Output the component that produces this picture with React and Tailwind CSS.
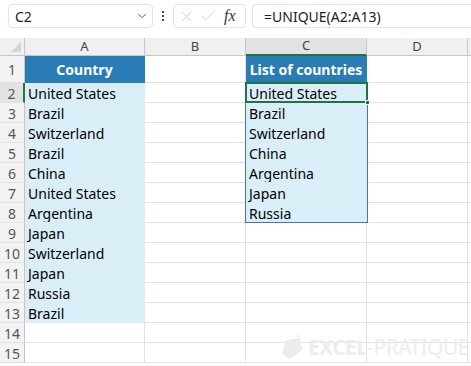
import React from "react";
import { X, Check, ChevronDown } from "lucide-react";

const colA = [
  "United States", "Brazil", "Switzerland", "Brazil", "China", "United States",
  "Argentina", "Japan", "Switzerland", "Japan", "Russia", "Brazil",
];
const colC = ["United States", "Brazil", "Switzerland", "China", "Argentina", "Japan", "Russia"];

function Cell({ fill, header, children }) {
  if (header) {
    return (
      <div className="flex items-center justify-center bg-[#2a7db4] border-r border-b border-[#2a7db4] text-white font-bold text-[14px]">
        {children}
      </div>
    );
  }
  return (
    <div
      className={`flex items-center pl-[3px] pt-[1px] border-r border-b text-[14px] text-black whitespace-nowrap overflow-hidden ${
        fill ? "bg-[#daeef8] border-[#daeef8]" : "bg-white border-[#e1e1e1]"
      }`}
    >
      {children}
    </div>
  );
}

export default function App() {
  const rows = Array.from({ length: 15 }, (_, i) => i + 1);

  return (
    <div className="w-[471px] h-[366px] overflow-hidden bg-white select-none" style={{ fontFamily: '"Noto Sans", "Open Sans", sans-serif' }}>
      {/* formula bar */}
      <div className="h-[38px] flex items-start pt-[4px] pl-[8px] gap-[6px] bg-white">
        <div className="w-[145px] h-[24px] rounded-[4px] border border-[#e3e3e3] flex items-center justify-between pl-[6px] pr-[3px] text-[14px] text-[#222]">
          <span>C2</span>
          <ChevronDown size={14} strokeWidth={1.6} className="text-[#555]" />
        </div>
        <div className="h-[24px] flex flex-col items-center justify-center gap-[2px] w-[8px]">
          <span className="w-[2px] h-[2px] bg-[#444]" />
          <span className="w-[2px] h-[2px] bg-[#444]" />
          <span className="w-[2px] h-[2px] bg-[#444]" />
        </div>
        <div className="w-[73px] h-[24px] rounded-[4px] border border-[#e3e3e3] flex items-center pl-[4px] gap-[4px] text-[#c8c8c8]">
          <X size={17} strokeWidth={1.2} />
          <Check size={18} strokeWidth={1.2} />
          <span className="text-[#333] italic text-[16px] ml-[3px] leading-none" style={{ fontFamily: '"Liberation Serif", serif' }}>
            fx
          </span>
        </div>
        <div className="flex-1 h-[24px] rounded-l-[4px] border border-r-0 border-[#e3e3e3] flex items-center pl-[11px] text-[14px] text-[#222]">
          =UNIQUE(A2:A13)
        </div>
      </div>

      {/* sheet */}
      <div className="relative">
        <div className="grid grid-cols-[25px_120px_101px_121px_101px_20px] grid-rows-[18px_27px_repeat(14,20px)]">
          {/* column headers */}
          <div className="relative bg-[#f0f0f0] border-r border-b border-[#c6c6c6]">
            <div className="absolute right-[3px] bottom-[3px] w-0 h-0 border-l-[10px] border-l-transparent border-b-[10px] border-b-[#d4d4d4]" />
          </div>
          {["A", "B", "C", "D", ""].map((l) => (
            <div
              key={l || "E"}
              className={`flex items-center justify-center text-[13px] text-[#444] border-r ${
                l === "C" ? "bg-[#e2e2e2] border-b-2 border-b-[#217346] border-r-[#c6c6c6]" : "bg-[#f0f0f0] border-b border-[#c6c6c6]"
              }`}
            >
              {l}
            </div>
          ))}

          {rows.map((r) => {
            const a = r === 1 ? "Country" : colA[r - 2];
            const c = r === 1 ? "List of countries" : colC[r - 2];
            const aFill = r <= 13;
            const cFill = r <= 8;
            return (
              <React.Fragment key={r}>
                <div
                  className={`flex items-center justify-center pt-[1px] text-[14px] text-[#555] border-b border-b-[#e1e1e1] ${
                    r === 2 ? "bg-[#e2e2e2] border-r-2 border-r-[#217346]" : "bg-[#f3f3f3] border-r border-r-[#c6c6c6]"
                  }`}
                >
                  {r}
                </div>
                <Cell fill={aFill} header={r === 1}>{aFill ? a : ""}</Cell>
                <Cell />
                <Cell fill={cFill} header={r === 1}>{cFill ? c : ""}</Cell>
                <Cell />
                <Cell />
              </React.Fragment>
            );
          })}
        </div>

        {/* spill range border */}
        <div className="absolute left-[245px] top-[44px] w-[123px] h-[141px] border border-[#4472c4] pointer-events-none" />
        {/* active cell */}
        <div className="absolute left-[245px] top-[44px] w-[123px] h-[21px] border-2 border-[#217346] pointer-events-none" />
        <div className="absolute left-[365px] top-[62px] w-[5px] h-[5px] bg-[#217346] border border-white pointer-events-none" />

        {/* watermark */}
        <div className="absolute left-[280px] top-[296px] flex items-center gap-[3px] pointer-events-none">
          <svg width="25" height="27" viewBox="0 0 24 26">
            <path d="M5 6 L18 4 L22 15 L9 24 L2 19 Z" fill="#ececec" />
            <path d="M16 1 L20 7" stroke="#ececec" strokeWidth="1.5" />
          </svg>
          <span className="text-[21px] text-[#ededed] tracking-[-0.6px] leading-none whitespace-nowrap">
            <span className="font-bold">EXCEL</span>-PRATIQUE
          </span>
        </div>
      </div>
    </div>
  );
}
